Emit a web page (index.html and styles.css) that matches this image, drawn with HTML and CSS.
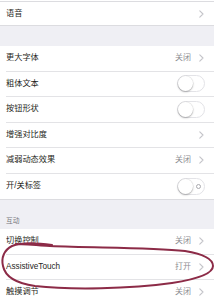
FILE: index.html
```html
<!DOCTYPE html>
<html lang="zh">
<head>
<meta charset="utf-8">
<link rel="stylesheet" href="styles.css">
</head>
<body>
<div class="page">
  <div class="group">
    <div class="cell stub"><div class="inner"></div></div>
    <div class="cell top"><div class="inner last"><span class="label">语音</span><span class="acc"><svg class="chev" width="5" height="8" viewBox="0 0 5 8"><polyline points="0.8,0.8 4,4 0.8,7.2"/></svg></span></div></div>
  </div>
  <div class="gap"></div>
  <div class="group">
    <div class="cell"><div class="inner"><span class="label">更大字体</span><span class="acc"><span class="value">关闭</span><svg class="chev" width="5" height="8" viewBox="0 0 5 8"><polyline points="0.8,0.8 4,4 0.8,7.2"/></svg></span></div></div>
    <div class="cell"><div class="inner"><span class="label">粗体文本</span><span class="switch"><span class="knob"></span></span></div></div>
    <div class="cell"><div class="inner"><span class="label">按钮形状</span><span class="switch"><span class="knob"></span></span></div></div>
    <div class="cell"><div class="inner"><span class="label">增强对比度</span><span class="acc"><svg class="chev" width="5" height="8" viewBox="0 0 5 8"><polyline points="0.8,0.8 4,4 0.8,7.2"/></svg></span></div></div>
    <div class="cell"><div class="inner"><span class="label">减弱动态效果</span><span class="acc"><span class="value">关闭</span><svg class="chev" width="5" height="8" viewBox="0 0 5 8"><polyline points="0.8,0.8 4,4 0.8,7.2"/></svg></span></div></div>
    <div class="cell"><div class="inner last"><span class="label">开/关标签</span><span class="switch"><span class="knob"></span><span class="ring"></span></span></div></div>
  </div>
  <div class="header">互动</div>
  <div class="group">
    <div class="cell"><div class="inner"><span class="label">切换控制</span><span class="acc"><span class="value">关闭</span><svg class="chev" width="5" height="8" viewBox="0 0 5 8"><polyline points="0.8,0.8 4,4 0.8,7.2"/></svg></span></div></div>
    <div class="cell"><div class="inner"><span class="label latin">AssistiveTouch</span><span class="acc"><span class="value">打开</span><svg class="chev" width="5" height="8" viewBox="0 0 5 8"><polyline points="0.8,0.8 4,4 0.8,7.2"/></svg></span></div></div>
    <div class="cell"><div class="inner"><span class="label">触摸调节</span><span class="acc"><span class="value">关闭</span><svg class="chev" width="5" height="8" viewBox="0 0 5 8"><polyline points="0.8,0.8 4,4 0.8,7.2"/></svg></span></div></div>
  </div>
  <svg class="scribble" width="214" height="304" viewBox="0 0 214 304">
    <path d="M 52 245 C 38 243, 22 242, 12 246 C 4 250, 1 258, 3 266 C 5 276, 14 283, 35 286 C 70 290, 130 289, 172 283 C 198 279, 213 273, 213 266 C 213 259, 203 254, 185 251 C 150 247, 95 248, 50 246 C 35 245, 22 244, 16 244"/>
  </svg>
</div>
</body>
</html>
```

FILE: styles.css
```css
html, body {
  margin: 0;
  padding: 0;
}
body {
  background: #efeff4;
  font-family: "Liberation Sans", "Noto Sans CJK SC", sans-serif;
  font-size: 8.2px;
  color: #1f1f22;
  width: 214px;
  height: 304px;
  overflow: hidden;
}
.page {
  position: relative;
  width: 214px;
  height: 304px;
}
.group {
  background: #ffffff;
  border-bottom: 1px solid #dcdce0;
}
.cell {
  padding-left: 6px;
}
.inner {
  height: 25.5px;
  box-sizing: border-box;
  border-bottom: 1px solid #e3e3e6;
  display: flex;
  align-items: center;
  justify-content: space-between;
  padding-right: 10px;
}
.inner.last {
  border-bottom: none;
}
.stub {
  padding-left: 0;
}
.stub .inner {
  height: 2px;
  border-bottom-color: #dcdce0;
}
.top .inner {
  height: 23px;
}
.gap {
  height: 20px;
}
.header {
  height: 29px;
  box-sizing: border-box;
  padding: 16px 0 0 6px;
  font-size: 6.8px;
  color: #77777c;
  line-height: 9px;
}
.label {
  line-height: 10px;
}
.latin {
  letter-spacing: 0;
}
.acc {
  display: flex;
  align-items: center;
  gap: 8px;
}
.value {
  color: #8e8e93;
  font-size: 8px;
  line-height: 10px;
}
.chev {
  display: block;
}
.chev polyline {
  fill: none;
  stroke: #c4c4c9;
  stroke-width: 1.1;
  stroke-linecap: round;
  stroke-linejoin: round;
}
.switch {
  width: 28px;
  height: 17px;
  box-sizing: border-box;
  border: 1px solid #e3e3e7;
  border-radius: 9px;
  background: #ffffff;
  display: flex;
  align-items: center;
  justify-content: space-between;
  margin-right: -1px;
}
.knob {
  width: 15px;
  height: 15px;
  border-radius: 50%;
  background: #ffffff;
  box-shadow: 0 1px 2px rgba(0, 0, 0, 0.28), 0 0 0 0.5px rgba(0, 0, 0, 0.08);
}
.ring {
  width: 3px;
  height: 3px;
  border: 1px solid #a9a9ae;
  border-radius: 50%;
  margin-right: 3px;
}
.scribble {
  position: absolute;
  left: 0;
  top: 0;
  pointer-events: none;
}
.scribble path {
  fill: none;
  stroke: #8c2b47;
  stroke-width: 2;
  stroke-linecap: round;
  stroke-linejoin: round;
}
```
